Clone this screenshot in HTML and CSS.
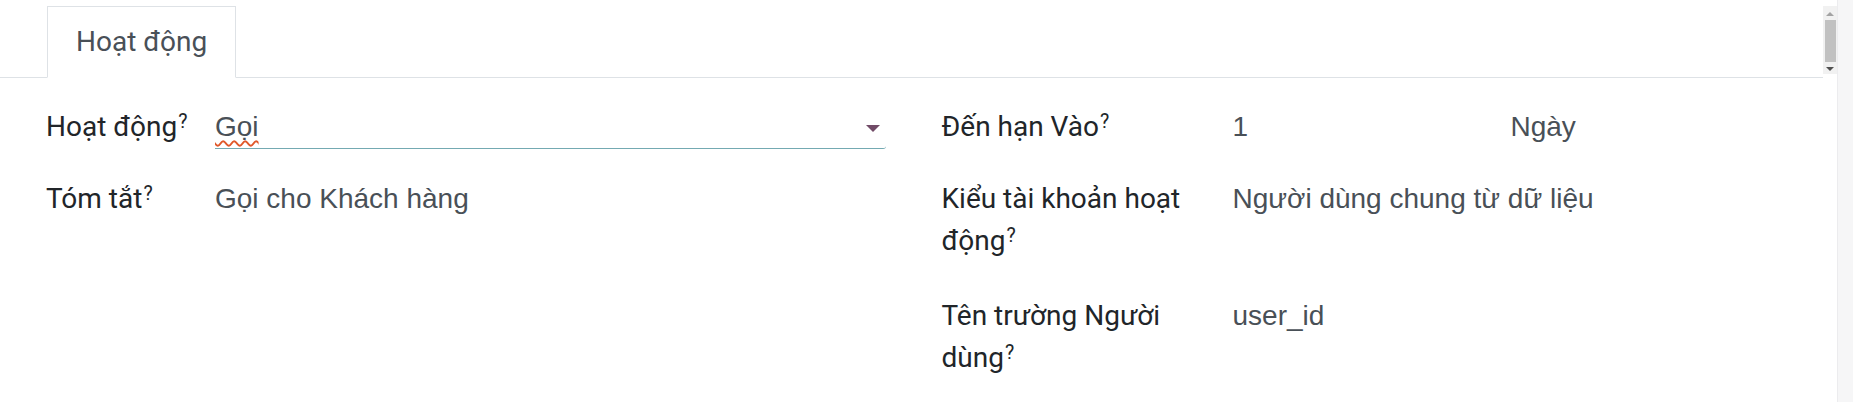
FILE: index.html
```html
<!DOCTYPE html>
<html>
<head>
  <title>Hoạt động</title>
  <link rel="stylesheet" href="styles.css">
</head>
<body>
  <div class="screen">
    <div class="page">
      <div class="tabbar">
        <ul class="tabs">
          <li class="tab active">Hoạt động</li>
        </ul>
        <div class="mini-scroll">
          <span class="arrow up"></span>
          <span class="thumb"></span>
          <span class="arrow down"></span>
        </div>
      </div>

      <div class="sheet">
        <div class="group left">
          <div class="row">
            <div class="label">Hoạt động<sup>?</sup></div>
            <div class="value">
              <div class="field focused">
                <span class="misspelt">Gọi</span>
                <span class="caret"></span>
              </div>
            </div>
          </div>
          <div class="row">
            <div class="label">Tóm tắt<sup>?</sup></div>
            <div class="value">
              <div class="field">Gọi cho Khách hàng</div>
            </div>
          </div>
        </div>

        <div class="group right">
          <div class="row">
            <div class="label">Đến hạn Vào<sup>?</sup></div>
            <div class="value split">
              <div class="field number">1</div>
              <div class="field">Ngày</div>
            </div>
          </div>
          <div class="row tall">
            <div class="label">Kiểu tài khoản hoạt động<sup>?</sup></div>
            <div class="value">
              <div class="field">Người dùng chung từ dữ liệu</div>
            </div>
          </div>
          <div class="row">
            <div class="label">Tên trường Người dùng<sup>?</sup></div>
            <div class="value">
              <div class="field">user_id</div>
            </div>
          </div>
        </div>
      </div>
    </div>
    <div class="page-scroll"></div>
  </div>
</body>
</html>
```

FILE: styles.css
```css
* {
  box-sizing: border-box;
  margin: 0;
  padding: 0;
}
html, body {
  height: 100%;
}
body {
  font-family: Roboto, "Noto Sans", sans-serif;
  font-size: 28px;
  line-height: 42px;
  color: #212529;
  background-color: #fff;
}
.screen {
  display: flex;
  height: 100%;
}
.page {
  flex: 1;
}
.page-scroll {
  width: 16px;
  background-color: #f6f6f7;
  border-left: 1px solid #ececee;
}

/* tab header */
.tabbar {
  display: flex;
  padding-top: 6px;
}
.tabs {
  flex: 1;
  display: flex;
  list-style: none;
  padding-left: 47px;
  border-bottom: 1px solid #dee2e6;
}
.tab {
  padding: 14px 28px;
  color: #495057;
  border: 1px solid #dee2e6;
  border-bottom-color: #fff;
  margin-bottom: -1px;
  background-color: #fff;
}
.mini-scroll {
  width: 14px;
  height: 68px;
  background-color: #f1f1f1;
  display: flex;
  flex-direction: column;
  align-items: center;
  padding-top: 6px;
}
.mini-scroll .arrow {
  width: 0;
  height: 0;
  border-left: 4px solid transparent;
  border-right: 4px solid transparent;
}
.mini-scroll .up {
  border-bottom: 4px solid #a3a3a3;
}
.mini-scroll .down {
  border-top: 4px solid #505050;
  margin-top: 5px;
}
.mini-scroll .thumb {
  width: 11px;
  height: 42px;
  margin-top: 4px;
  background-color: #c1c1c1;
}

/* form sheet */
.sheet {
  display: flex;
  padding: 28px 23px 0;
}
.group {
  flex: 1;
  padding: 0 23px;
}
.row {
  display: flex;
  margin-bottom: 29px;
}
.row.tall {
  margin-bottom: 33px;
}
.label {
  padding-right: 26px;
}
.left .label {
  width: 169px;
  flex-shrink: 0;
}
.right .label {
  width: 291px;
  flex-shrink: 0;
}
.label sup {
  position: relative;
  font-size: 70%;
  line-height: 0;
  vertical-align: baseline;
  top: -0.42em;
  margin-left: 1px;
}
.value {
  flex: 1;
}
.left .value {
  padding-right: 10px;
}
.value.split {
  display: flex;
}
.field {
  font-family: "Liberation Sans", Arial, sans-serif;
  color: #495057;
  border-bottom: 1px solid transparent;
}
.field.number {
  width: 278px;
}
.field.focused {
  display: flex;
  align-items: center;
  justify-content: space-between;
  border-bottom-color: #74aab2;
  border-bottom-right-radius: 3px;
  padding-right: 6px;
}
.misspelt {
  text-decoration: underline wavy #e0582a;
  text-decoration-thickness: 2px;
  text-underline-offset: 4px;
}
.caret {
  width: 0;
  height: 0;
  border-left: 7px solid transparent;
  border-right: 7px solid transparent;
  border-top: 7px solid #714b67;
  margin-top: 3px;
}
```
